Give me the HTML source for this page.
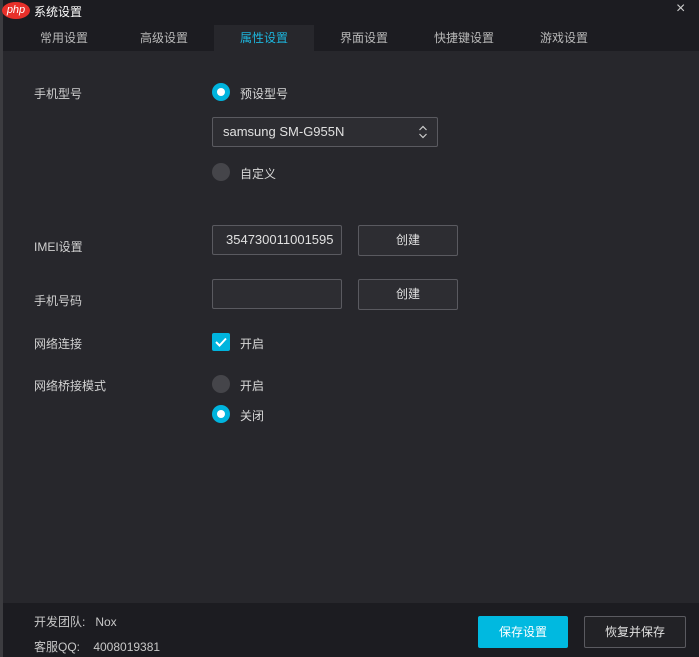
<!DOCTYPE html>
<html><head><meta charset="utf-8"><style>
*{margin:0;padding:0;box-sizing:border-box}
body{width:699px;height:657px;background:#1c1c21;font-family:"Liberation Sans","Noto Sans CJK SC",sans-serif;font-size:12px;color:#d8d8d8;position:relative;overflow:hidden}
.a{position:absolute}
.strip{left:0;top:0;width:3px;height:657px;background:#3c3c40}
.tab{top:25px;height:26px;width:100px;text-align:center;line-height:27px;color:#b8b8b8;font-size:12px}
.content{left:3px;top:51px;width:696px;height:552px;background:#27272c}
.lab{left:34px;color:#d0d0d0}
.rad{width:18px;height:18px;border-radius:50%;background:#45454a}
.rad.on{background:#00b4de}
.rad.on::after{content:"";position:absolute;left:5px;top:5px;width:8px;height:8px;border-radius:50%;background:#fff}
.box{border:1px solid #5a5a60;border-radius:2px;background:#2d2d32}
.btn{border:1px solid #5a5a60;border-radius:2px;background:#2d2d32;text-align:center;color:#e0e0e0}
</style></head><body>
<div class="a strip"></div>
<div class="a" style="left:2px;top:2px;width:28px;height:17px;border-radius:50%;background:#e8302a;color:#fff;font-size:11px;font-style:italic;line-height:17px;text-align:center">php</div>
<div class="a" style="left:34px;top:3px;color:#fff;font-size:12px">系统设置</div>
<div class="a" style="left:676px;top:0px;color:#ccc;font-size:16px">×</div>
<div class="a tab" style="left:14px">常用设置</div>
<div class="a tab" style="left:114px">高级设置</div>
<div class="a tab" style="left:214px;background:#27272c;color:#1db4db">属性设置</div>
<div class="a tab" style="left:314px">界面设置</div>
<div class="a tab" style="left:414px">快捷键设置</div>
<div class="a tab" style="left:514px">游戏设置</div>
<div class="a content"></div>

<div class="a lab" style="top:85px">手机型号</div>
<div class="a rad on" style="left:212px;top:83px"></div>
<div class="a" style="left:240px;top:85px">预设型号</div>
<div class="a box" style="left:212px;top:117px;width:226px;height:30px"></div>
<div class="a" style="left:223px;top:124px;font-size:13px;color:#e0e0e0">samsung SM-G955N</div>
<svg class="a" style="left:417px;top:124px" width="12" height="16"><path d="M2.5 6L6 2.5 9.5 6M2.5 10L6 13.5 9.5 10" stroke="#ccc" stroke-width="1.2" fill="none"/></svg>
<div class="a rad" style="left:212px;top:163px"></div>
<div class="a" style="left:240px;top:165px">自定义</div>

<div class="a lab" style="top:238px">IMEI设置</div>
<div class="a box" style="left:212px;top:225px;width:130px;height:30px"></div>
<div class="a" style="left:226px;top:232px;font-size:13px;color:#e0e0e0">354730011001595</div>
<div class="a btn" style="left:358px;top:225px;width:100px;height:31px;line-height:29px">创建</div>

<div class="a lab" style="top:292px">手机号码</div>
<div class="a box" style="left:212px;top:279px;width:130px;height:30px"></div>
<div class="a btn" style="left:358px;top:279px;width:100px;height:31px;line-height:29px">创建</div>

<div class="a lab" style="top:335px">网络连接</div>
<div class="a" style="left:212px;top:333px;width:18px;height:18px;background:#00b4de;border-radius:2px"><svg width="18" height="18"><path d="M4 9l3.5 3.5L14 5.5" stroke="#fff" stroke-width="2" fill="none"/></svg></div>
<div class="a" style="left:240px;top:335px">开启</div>

<div class="a lab" style="top:377px">网络桥接模式</div>
<div class="a rad" style="left:212px;top:375px"></div>
<div class="a" style="left:240px;top:377px">开启</div>
<div class="a rad on" style="left:212px;top:405px"></div>
<div class="a" style="left:240px;top:407px">关闭</div>

<div class="a" style="left:34px;top:613px;color:#c8c8c8">开发团队:&nbsp;&nbsp; Nox</div>
<div class="a" style="left:34px;top:638px;color:#c8c8c8">客服QQ:&nbsp;&nbsp;&nbsp; 4008019381</div>
<div class="a" style="left:478px;top:616px;width:90px;height:32px;background:#00b9e0;border-radius:2px;color:#fff;text-align:center;line-height:32px">保存设置</div>
<div class="a btn" style="left:584px;top:616px;width:102px;height:32px;line-height:30px;background:#222226">恢复并保存</div>
</body></html>
